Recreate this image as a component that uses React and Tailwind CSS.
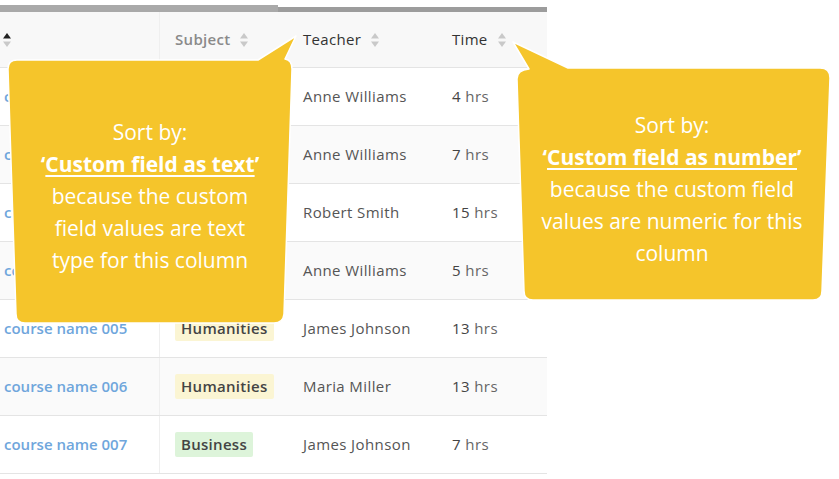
import React from 'react';

const rows = [
    { course: 'course name 001', subject: 'Science', tag: 'green', teacher: 'Anne Williams', hrs: '4' },
    { course: 'course name 002', subject: 'Humanities', tag: 'yellow', teacher: 'Anne Williams', hrs: '7' },
    { course: 'course name 003', subject: 'Business', tag: 'green', teacher: 'Robert Smith', hrs: '15' },
    { course: 'course name 004', subject: 'Humanities', tag: 'yellow', teacher: 'Anne Williams', hrs: '5' },
    { course: 'course name 005', subject: 'Humanities', tag: 'yellow', teacher: 'James Johnson', hrs: '13' },
    { course: 'course name 006', subject: 'Humanities', tag: 'yellow', teacher: 'Maria Miller', hrs: '13' },
    { course: 'course name 007', subject: 'Business', tag: 'green', teacher: 'James Johnson', hrs: '7' },
];

function SortIcon({ active }) {
    return (
        <svg width="10" height="16" viewBox="0 0 10 16" className="shrink-0">
            <path d="M5 1 L9 6.5 L1 6.5 Z" fill={active ? '#222' : '#c9c9c9'} />
            <path d="M5 15 L9 9.5 L1 9.5 Z" fill="#c9c9c9" />
        </svg>
    );
}

function Bubbles() {
    return (
        <svg width="839" height="479" viewBox="0 0 839 479" className="absolute inset-0 pointer-events-none">
            <path
                d="M17 60 L258 60 L296 36 L285 59 Q292 60 292 69 L284 314 Q283 323 274 323 L25 323 Q16 323 16 314 L8 69 Q8 60 17 60 Z"
                fill="#f5c52b"
                stroke="#ffffff"
                strokeWidth="1.5"
                strokeLinejoin="round"
            />
            <path
                d="M513 42 L568 68 L820 68 Q830 68 830 78 L822 291 Q822 300 813 300 L533 300 Q524 300 524 291 L517 79 Q517 70 529 69 Z"
                fill="#f5c52b"
                stroke="#ffffff"
                strokeWidth="1.5"
                strokeLinejoin="round"
            />
        </svg>
    );
}

export default function App() {
    return (
        <div className="relative w-[839px] h-[479px] overflow-hidden bg-white" style={{ fontFamily: '"Open Sans", sans-serif' }}>
            {/* table */}
            <div className="w-[547px] pt-[5px]">
                <div className="flex h-[7px]">
                    <div className="w-[278px] bg-[#a9a9a9]" />
                    <div className="flex-1 mt-[2px] bg-[#9c9c9c]" />
                </div>

                <div className="flex h-[56px] bg-[#f8f8f8] border-b border-[#e4e4e4] text-[15px] tracking-[0.3px]">
                    <div className="w-[160px] border-r border-[#efefef] flex items-center pl-[2px]">
                        <SortIcon active />
                    </div>
                    <div className="w-[118px] flex items-center gap-[9px] pl-[15px] font-semibold text-[#8a8a8a]">
                        Subject <SortIcon />
                    </div>
                    <div className="w-[154px] flex items-center gap-[9px] pl-[25px] text-[#333]">
                        Teacher <SortIcon />
                    </div>
                    <div className="flex-1 flex items-center gap-[9px] pl-[20px] text-[#333]">
                        Time <SortIcon />
                    </div>
                </div>

                {rows.map((r, i) => (
                    <div key={i} className={`flex h-[58px] border-b border-[#e4e4e4] text-[15px] tracking-[0.4px] ${i % 2 === 1 ? 'bg-[#fafafa]' : 'bg-white'}`}>
                        <div className="w-[160px] border-r border-[#efefef] flex items-center pl-[4px] font-semibold tracking-[0px] text-[#6fa6dc]">
                            {r.course}
                        </div>
                        <div className="w-[118px] flex items-center pl-[15px]">
                            {i > 3 && (
                                <span className={`px-[6px] py-[1px] rounded-[2px] font-semibold tracking-[0.3px] text-[#444] ${r.tag === 'yellow' ? 'bg-[#fbf5d3]' : 'bg-[#ddf4da]'}`}>
                                    {r.subject}
                                </span>
                            )}
                        </div>
                        <div className="w-[154px] flex items-center pl-[25px] text-[#555]">{r.teacher}</div>
                        <div className="flex-1 flex items-center pl-[20px] text-[#666]">
                            <span className="text-[#444]">{r.hrs}</span>&nbsp;hrs
                        </div>
                    </div>
                ))}
            </div>

            <Bubbles />

            {/* callout texts */}
            <div className="absolute left-[8px] top-[116px] w-[284px] text-center text-white text-[21px] leading-[32px]">
                Sort by:<br />
                <span className="font-bold">‘<span className="underline underline-offset-[3px]">Custom field as text</span>’</span><br />
                because the custom<br />
                field values are text<br />
                type for this column
            </div>
            <div className="absolute left-[520px] top-[109px] w-[304px] text-center text-white text-[21px] leading-[32px]">
                Sort by:<br />
                <span className="font-bold">‘<span className="underline underline-offset-[3px]">Custom field as number</span>’</span><br />
                because the custom field<br />
                values are numeric for this<br />
                column
            </div>
        </div>
    );
}
